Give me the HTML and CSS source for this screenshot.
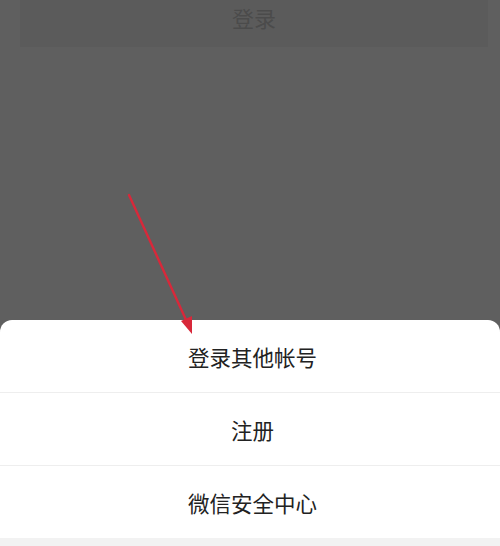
FILE: index.html
```html
<!DOCTYPE html>
<html lang="zh">
<head>
<meta charset="utf-8">
<link rel="stylesheet" href="styles.css">
</head>
<body>
<div class="screen">
  <div class="login-btn">登录</div>
  <div class="spacer"></div>
  <div class="sheet">
    <div class="row">登录其他帐号</div>
    <div class="row">注册</div>
    <div class="row last">微信安全中心</div>
    <div class="bottom"></div>
  </div>
  <svg class="arrow" width="500" height="546" viewBox="0 0 500 546">
    <line x1="129" y1="195" x2="187" y2="322" stroke="#d8283a" stroke-width="2.4" stroke-linecap="round"/>
    <polygon points="192,334 181,321 192,316" fill="#d8283a"/>
  </svg>
</div>
</body>
</html>
```

FILE: styles.css
```css
html, body {
  margin: 0;
  padding: 0;
}
body {
  font-family: "Noto Sans CJK SC", "Noto Sans", sans-serif;
}
.screen {
  position: relative;
  width: 500px;
  height: 546px;
  background: #5f5f5f;
  display: flex;
  flex-direction: column;
  overflow: hidden;
}
.login-btn {
  margin: 0 12px 0 20px;
  height: 47px;
  background: #5b5b5b;
  color: #4b4b4b;
  font-size: 22px;
  display: flex;
  align-items: center;
  justify-content: center;
  padding-bottom: 14px;
  box-sizing: border-box;
}
.spacer {
  flex: 1;
}
.sheet {
  background: #ffffff;
  border-radius: 12px 12px 0 0;
  display: flex;
  flex-direction: column;
}
.row {
  height: 72px;
  display: flex;
  align-items: center;
  justify-content: center;
  padding-left: 5px;
  font-size: 21.5px;
  color: #222222;
  border-bottom: 1px solid #eeeeee;
}
.row.last {
  border-bottom: none;
}
.bottom {
  height: 8px;
  background: #f2f2f2;
}
.arrow {
  position: absolute;
  left: 0;
  top: 0;
  pointer-events: none;
}
```
